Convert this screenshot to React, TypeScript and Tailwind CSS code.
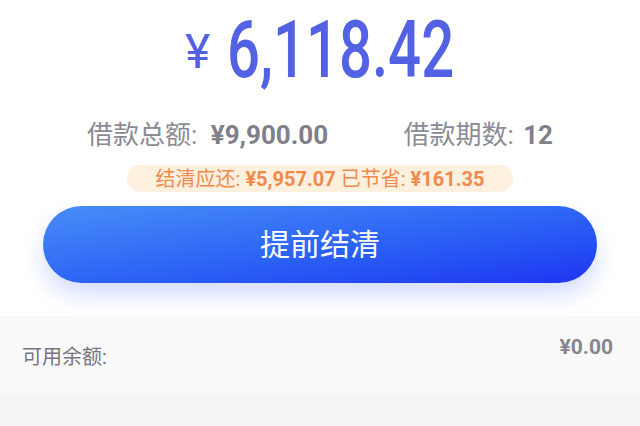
import React from 'react';

const FONT = "font-['Roboto','Noto_Sans_CJK_SC',sans-serif]";

export default function App() {
  return (
    <div className={`${FONT} relative h-[426px] w-[640px] overflow-hidden bg-white`}>
      {/* Amount */}
      <div className="flex h-[100px] items-center justify-center text-[#5361e3]">
        <span className="mr-[17px] mt-[4px] text-[48px] leading-none">¥</span>
        <span className="inline-block origin-left scale-x-[0.735] text-[79px] font-medium leading-none -mr-[81px]">
          6,118.42
        </span>
      </div>

      {/* Loan info */}
      <div className="mt-[18px] flex items-center justify-between px-[87px] text-[26px] leading-[34px] text-[#8a8b94]">
        <div>
          借款总额: <span className="ml-[7px] font-bold text-[#7f808a]">¥9,900.00</span>
        </div>
        <div>
          借款期数: <span className="ml-[3px] font-bold text-[#7f808a]">12</span>
        </div>
      </div>

      <div className="mt-[13px] flex justify-center">
        <div className="flex h-[27px] w-[386px] items-center justify-center rounded-full bg-[#fdf0df] text-[20px] text-[#f08a4b]">
          结清应还: <span className="mx-[5px] font-bold">¥5,957.07</span>已节省:
          <span className="ml-[5px] font-bold">¥161.35</span>
        </div>
      </div>

      {/* Button */}
      <div className="mt-[14px] px-[43px]">
        <button className="flex h-[77px] w-full items-center justify-center rounded-full bg-gradient-to-br from-[#4a8cf7] to-[#2131f2] text-[30px] text-white shadow-[0_12px_22px_rgba(70,100,245,0.22)]">
          提前结清
        </button>
      </div>

      {/* Balance */}
      <div className="mt-[33px] flex h-[77px] items-start justify-between bg-[#f9f9f9] px-[22px]">
        <span className="mt-[26px] text-[20px] text-[#75757d]">可用余额:</span>
        <span className="mr-[5px] mt-[16px] text-[21px] font-bold text-[#86868f]">¥0.00</span>
      </div>
      <div className="h-[40px] bg-[#f4f4f4]" />
    </div>
  );
}
